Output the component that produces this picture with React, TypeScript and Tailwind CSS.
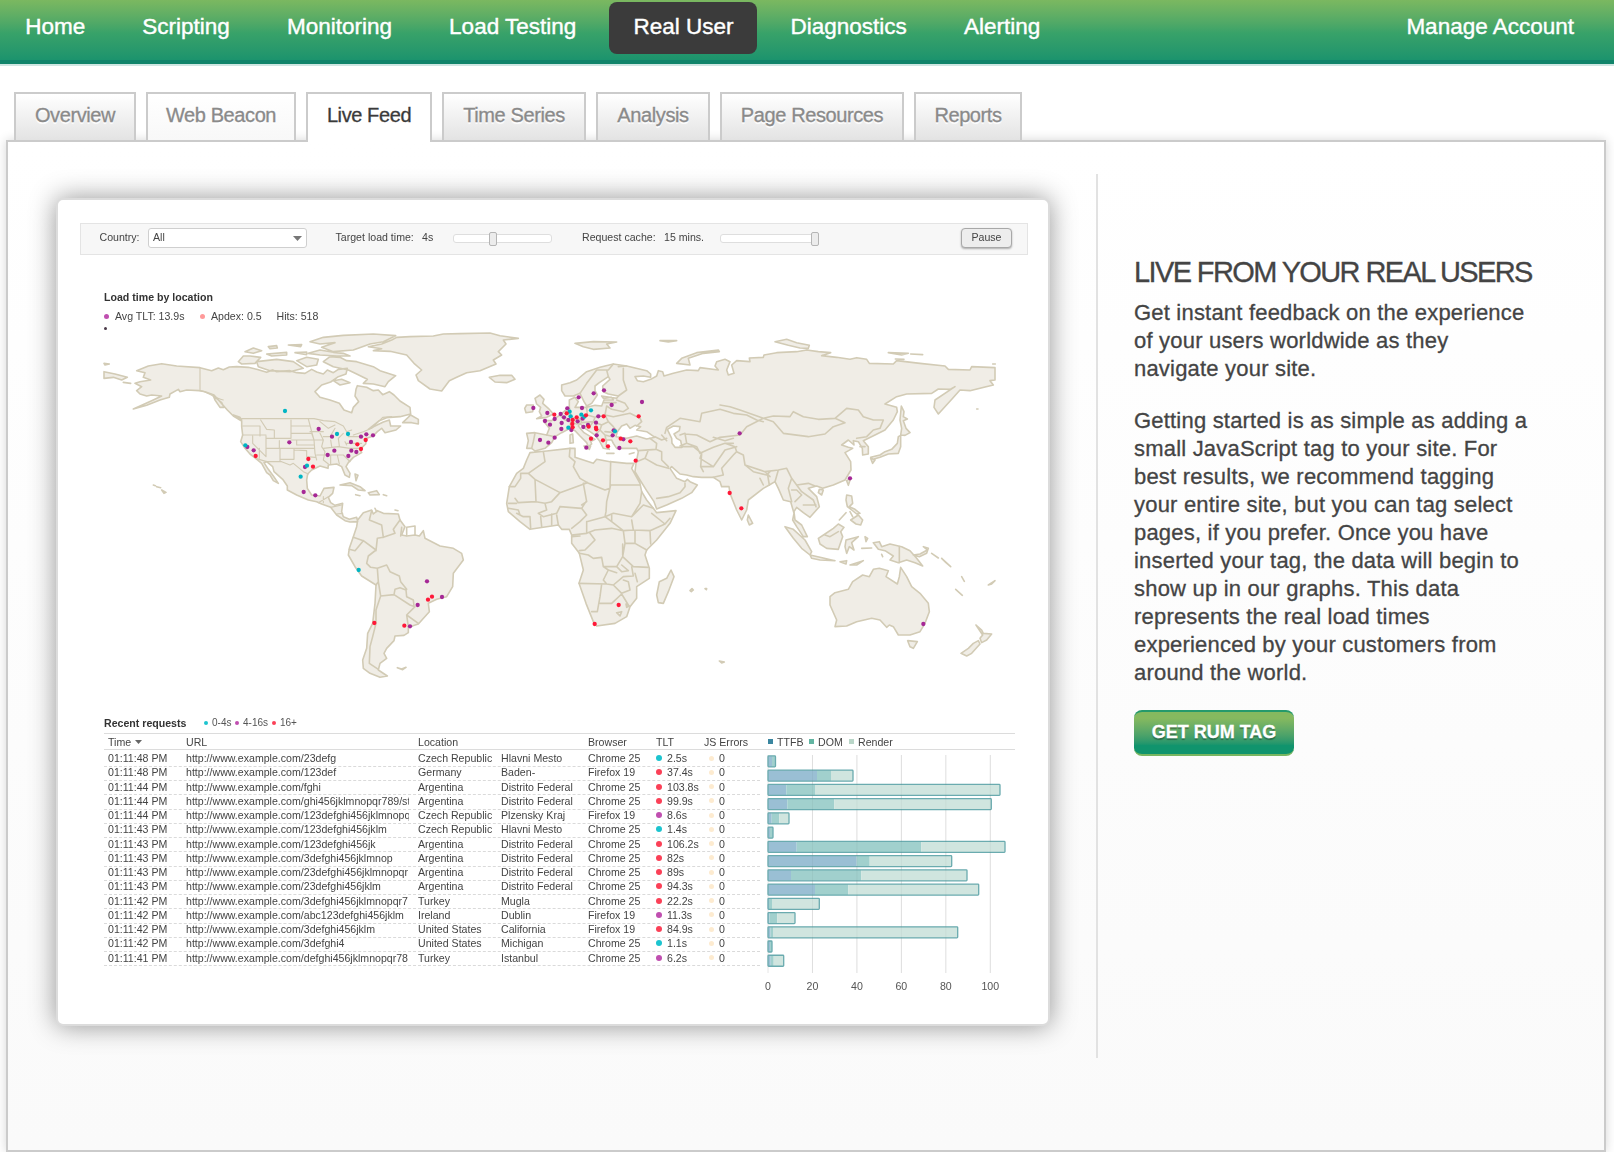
import React from "react";

const NAV = ["Home", "Scripting", "Monitoring", "Load Testing", "Real User", "Diagnostics", "Alerting"];

const TABS = [
  { label: "Overview", width: "w-[122px]", look: "bg-linear-to-b from-white to-[#e3e3e3] text-[#8a8a8a]" },
  { label: "Web Beacon", width: "w-[150px]", look: "bg-linear-to-b from-white to-[#f8f8f8] text-[#8a8a8a]" },
  { label: "Live Feed", width: "w-[126px]", look: "bg-white text-[#3a3a3a]" },
  { label: "Time Series", width: "w-[144px]", look: "bg-linear-to-b from-white to-[#e3e3e3] text-[#8a8a8a]" },
  { label: "Analysis", width: "w-[114px]", look: "bg-linear-to-b from-white to-[#e3e3e3] text-[#8a8a8a]" },
  { label: "Page Resources", width: "w-[184px]", look: "bg-linear-to-b from-white to-[#e3e3e3] text-[#8a8a8a]" },
  { label: "Reports", width: "w-[108px]", look: "bg-linear-to-b from-white to-[#e3e3e3] text-[#8a8a8a]" },
];

type Row = [string, string, string, string, string, string, string];
const ROWS: Row[] = [
  ["01:11:48 PM", "23defg", "Czech Republic", "Hlavni Mesto", "Chrome 25", "2.5s", "t"],
  ["01:11:48 PM", "123def", "Germany", "Baden-", "Firefox 19", "37.4s", "r"],
  ["01:11:44 PM", "fghi", "Argentina", "Distrito Federal", "Chrome 25", "103.8s", "r"],
  ["01:11:44 PM", "ghi456jklmnopqr789/st", "Argentina", "Distrito Federal", "Chrome 25", "99.9s", "r"],
  ["01:11:44 PM", "123defghi456jklmnopq", "Czech Republic", "Plzensky Kraj", "Firefox 19", "8.6s", "p"],
  ["01:11:43 PM", "123defghi456jklm", "Czech Republic", "Hlavni Mesto", "Chrome 25", "1.4s", "t"],
  ["01:11:43 PM", "123defghi456jk", "Argentina", "Distrito Federal", "Chrome 25", "106.2s", "r"],
  ["01:11:43 PM", "3defghi456jklmnop", "Argentina", "Distrito Federal", "Chrome 25", "82s", "r"],
  ["01:11:43 PM", "23defghi456jklmnopqr", "Argentina", "Distrito Federal", "Chrome 25", "89s", "r"],
  ["01:11:43 PM", "23defghi456jklm", "Argentina", "Distrito Federal", "Chrome 25", "94.3s", "r"],
  ["01:11:42 PM", "3defghi456jklmnopqr7", "Turkey", "Mugla", "Chrome 25", "22.2s", "r"],
  ["01:11:42 PM", "abc123defghi456jklm", "Ireland", "Dublin", "Firefox 19", "11.3s", "p"],
  ["01:11:42 PM", "3defghi456jklm", "United States", "California", "Firefox 19", "84.9s", "r"],
  ["01:11:42 PM", "3defghi4", "United States", "Michigan", "Chrome 25", "1.1s", "t"],
  ["01:11:41 PM", "defghi456jklmnopqr78", "Turkey", "Istanbul", "Chrome 25", "6.2s", "p"],
];

const DOT_BG: Record<string, string> = { t: "bg-[#1cc4cf]", r: "bg-[#fb4057]", p: "bg-[#c04fb0]" };

// Bar segment ends in px from the axis: first byte, DOM, render.
const BARS: [number, number, number][] = [
  [4, 7, 7.5], [49, 63, 85], [18.3, 47, 232], [19.3, 66.3, 223.3], [3.7, 11.3, 21],
  [2, 5, 5], [28.7, 153.3, 237], [88.7, 101.7, 183.7], [23, 93.3, 199], [47, 80.3, 210.7],
  [1, 4, 51.3], [1.5, 9.3, 27], [2.5, 5, 189.7], [2, 4, 4], [2.7, 5.7, 15.7],
];

// Map geometry. The Americas use their own origin; the Old World group is shifted right by 1170.
const AMERICAS =
  "M140,152 175,138 215,131 260,138 330,143 365,152 385,144 400,149 418,141 440,140 475,142 500,148 530,157 548,150 560,155 600,152 620,158 645,160 665,148 680,156 700,162 712,150 730,158 745,148 772,145 768,162 745,170 722,186 695,195 675,215 690,232 720,240 748,250 762,270 785,278 790,262 806,245 795,228 798,208 802,197 830,202 850,212 865,210 878,224 898,215 912,225 930,243 960,262 962,282 930,290 890,293 868,302 835,328 855,318 880,306 898,300 902,318 932,318 918,330 885,338 875,325 862,335 850,348 830,355 827,372 810,388 815,398 790,412 775,428 768,440 780,460 778,472 765,465 755,440 740,432 715,435 714,445 690,438 665,450 653,462 650,480 652,505 665,525 690,528 702,505 732,502 728,520 715,532 722,548 735,556 758,550 755,575 760,590 778,598 800,592 803,605 780,606 765,602 740,585 722,562 695,552 680,545 655,540 620,525 592,510 592,498 578,478 552,455 548,440 530,425 522,428 535,448 550,468 565,490 550,482 540,465 530,458 515,430 497,415 480,402 465,385 452,365 458,345 455,320 455,303 430,288 412,270 390,245 372,225 345,215 328,212 290,210 270,215 265,208 240,222 238,232 210,240 170,256 130,267 150,258 185,242 215,228 185,225 170,228 150,222 140,212 155,200 135,190 150,185 182,180 160,172 165,158Z " +
  "M820,578 845,570 850,582 862,572 880,580 925,582 930,600 945,620 935,645 950,648 975,645 988,648 1000,632 1005,655 1050,678 1090,685 1115,700 1120,720 1090,760 1088,800 1070,830 1040,838 1015,850 1018,875 985,912 955,922 955,938 942,946 915,948 912,962 890,985 882,1000 890,1015 870,1030 865,1050 892,1068 870,1072 840,1060 820,1045 818,1020 830,985 833,940 848,910 855,850 858,795 815,768 795,740 775,705 778,685 790,650 800,620 803,600Z " +
  "M835,80 875,72 905,60 920,52 960,50 1030,48 1060,42 1110,41 1200,39 1230,47 1285,55 1240,60 1248,72 1225,95 1235,105 1210,120 1218,132 1170,152 1130,158 1100,172 1078,182 1055,213 1020,207 985,182 978,165 995,150 972,130 950,105 900,94 850,92 875,86Z " +
  "M660,65 700,52 760,46 850,42 917,47 880,65 840,72 790,90 730,95 695,82 735,68 690,72Z " +
  "M700,125 720,110 750,112 770,122 800,125 850,140 870,152 917,167 895,185 885,200 850,192 820,190 832,178 800,162 775,150 730,140Z " +
  "M500,125 560,118 610,125 640,145 600,155 540,152 505,140Z M445,125 460,108 480,108 512,112 495,130 455,132Z M465,95 490,84 515,92 490,100Z M535,80 560,77 562,84 540,86Z M595,75 635,74 632,80Z M530,102 590,97 590,105 545,108Z M615,98 650,96 650,104Z M620,122 650,112 685,118 680,135 650,140Z M655,100 690,90 730,97 760,100 780,108 740,108 690,105Z M730,182 755,178 780,188 750,195Z " +
  "M938,308 962,285 985,298 985,312 965,308Z M42,155 75,162 112,172 95,180 70,172 42,175Z M42,130 58,132 45,135Z M100,187 122,190Z M430,285 450,292 455,300Z M370,228 395,248 402,262 390,262 375,240Z " +
  "M750,495 780,488 810,500 825,512 805,510 785,497Z M835,518 860,512 868,524 840,525Z M797,524 810,527Z M880,524 890,527Z M795,462 804,466 798,482Z M200,500 212,503Z M190,495 196,497Z M215,510 228,517 222,520Z M922,1043 935,1047 948,1042 938,1049Z M855,565 860,575Z M915,570 924,572Z";

const AMERICAS_LINES =
  "M330,143V212 M330,212C350,212 370,235 400,240 M455,296H672 M672,296 700,302 735,305 760,318 M760,318 770,335 785,330 M790,345 820,335 845,325 860,310 878,292 905,290 M458,318H510V348 M458,345H528 M512,300 530,328 553,330 M488,348V370L528,410 528,348 M553,330V355H603V300 M553,355H528 M603,318H660 M603,340H665L672,360H603 M528,385H672 M570,387V425 M568,362V385 M620,360V375H672 M612,387V418H572 M612,390 650,392 650,410 675,412 M655,297 665,335 672,360 675,400 680,420 M530,425H575L600,435 610,430 640,455 655,462 M497,415 530,425 M690,340 700,360 695,380 705,395 700,420 715,432 M660,335 700,335 M672,360H700 M680,405H760 M700,385 745,380 780,385 815,385 M722,360 725,380 M745,355 748,378 M722,405V432 M742,405 748,432 M760,405 780,425 M765,365 770,375 M770,370H815 M775,350 820,350 M690,305 715,325 735,315 M700,350 720,350 735,325 M745,355 760,340 M685,548 715,530 M700,530V548 M722,562 755,555 M740,582 758,580 M508,415V385";

const SA_LINES =
  "M845,572 838,600 875,615 880,652 M930,600 910,628 915,640 880,652 862,655 858,692 M790,652 820,662 858,690 M778,688 795,692 820,662 M858,690 835,708 830,730 842,742 862,745 890,735 900,755 928,768 932,785 950,808 M862,745 865,785 858,795 M865,785 872,828 912,824 915,808 930,803 948,810 950,830 970,840 972,858 M912,824 960,855 975,860 950,885 985,910 M950,885 955,920 M872,828 858,870 858,910 848,950 840,980 838,1030 865,1048 M935,622 932,648 M950,622 975,618 975,645 M950,622V646";

const OLD_WORLD =
  "M140,340 165,338 200,345 208,325 190,302 215,302 240,285 255,272 268,262 268,240 285,232 295,245 285,262 320,262 345,256 365,258 372,240 400,240 395,232 370,235 365,228 410,235 415,228 385,222 370,215 368,198 390,178 385,170 358,188 345,198 345,212 352,225 335,250 320,258 312,245 300,220 280,228 255,228 245,212 245,195 270,188 290,180 320,155 360,142 400,132 440,138 500,152 512,162 512,172 490,168 465,170 472,182 490,185 512,178 530,168 535,152 548,155 552,168 580,160 620,150 655,152 660,143 715,150 705,138 710,125 735,118 750,125 740,150 745,165 762,160 755,135 770,122 810,125 808,114 850,112 852,105 890,98 950,95 980,90 1015,95 1052,98 1025,107 1070,112 1110,118 1130,113 1160,118 1168,130 1240,132 1250,122 1320,130 1395,138 1405,148 1470,150 1475,140 1545,143 1545,180 1530,182 1540,195 1500,205 1470,212 1440,210 1418,235 1375,282 1362,262 1365,240 1425,200 1410,208 1375,207 1355,220 1280,222 1250,230 1215,252 1250,262 1252,275 1240,300 1215,330 1185,345 1150,362 1165,380 1165,402 1148,405 1147,385 1135,365 1120,362 1122,375 1105,360 1085,375 1105,382 1118,385 1095,398 1112,425 1113,450 1095,480 1060,495 1028,505 1010,498 985,505 1010,530 1018,560 990,592 970,578 950,562 942,575 945,600 965,615 982,650 970,650 950,620 938,600 942,580 932,545 910,540 895,505 885,485 868,495 850,505 805,540 800,570 785,600 770,570 750,520 747,500 725,500 720,485 700,472 665,472 640,470 620,465 600,462 575,440 570,445 590,475 615,485 622,478 630,485 652,495 635,518 605,535 560,555 530,567 522,545 500,512 480,480 465,455 468,430 475,395 470,385 440,385 410,385 400,370 395,360 380,360 378,375 388,388 370,385 358,362 345,345 330,335 310,322 300,310 295,318 312,338 345,358 338,362 330,358 335,372 325,380 320,368 300,348 285,332 270,325 245,338 225,350 215,368 195,385 165,393 155,385 140,385 145,362Z " +
  "M150,398 200,393 270,385 285,385 285,412 340,430 350,418 390,425 440,430 462,430 455,445 480,490 485,515 500,540 520,565 530,578 588,572 570,610 530,660 500,690 495,705 508,745 508,775 470,800 470,835 450,860 440,890 405,910 350,918 340,905 318,850 297,790 310,750 298,700 275,670 275,645 268,628 245,628 235,615 190,622 150,628 120,605 85,575 80,550 88,500 110,460 130,445 140,420Z " +
  "M28,172 60,166 95,166 105,178 80,188 45,186Z M165,235 180,225 192,238 188,250 205,265 220,282 200,292 170,296 185,288 178,275 182,262 170,252Z M140,255 160,255 158,275 138,278 134,265Z M285,70 340,65 410,66 380,72 390,84 340,88 310,80Z M540,62 590,62 565,66Z M590,130 605,115 650,98 715,90 718,95 670,100 625,115 630,135Z M573,750 582,770 565,815 550,850 535,848 530,825 538,785 560,775Z M630,812 636,806 640,810 634,815Z M675,806 680,806 679,809Z M718,1023 733,1026 725,1029Z M270,345 278,342 280,368 270,370Z M380,400 402,400Z M448,402 462,398Z M805,585 818,610 808,615 802,600Z M312,378 332,378 328,388Z " +
  "M885,65 920,58 950,68 988,76 985,85 960,84 925,76Z M1225,98 1285,100 1265,105Z M1292,102 1328,104Z M1246,117 1272,118Z M1264,258 1272,275 1270,290 1282,297 1270,302 1278,325 1290,338 1275,346 1262,345 1265,325 1260,300Z M1262,346 1262,380 1255,400 1225,402 1200,412 1180,418 1172,412 1200,405 1215,395 1235,388 1252,370 1255,350Z M1172,415 1185,420 1178,430Z M1100,482 1112,475 1105,496Z M1018,508 1030,510 1025,525 1015,518Z " +
  "M1100,525 1115,528 1118,550 1108,560 1125,568 1140,580 1130,582 1115,570 1102,560 1098,540Z M1112,600 1135,585 1148,600 1142,615 1128,612Z M1078,600 1098,578Z M1110,575 1118,590Z " +
  "M915,620 940,628 975,660 995,695 990,705 965,685 940,655Z M990,705 1020,712 1065,722 1020,720 995,715Z M1080,725 1100,722 1098,732Z M1110,735 1150,722 1130,735Z M1015,655 1035,642 1060,625 1075,612 1092,622 1082,635 1088,650 1075,688 1040,685 1020,672Z M1098,660 1135,650 1115,668 1122,690 1108,680 1100,700 1095,680Z M1155,650 1163,655 1158,665Z M1145,685 1175,684Z M1180,668 1198,665 1205,680 1230,672 1265,680 1290,692 1310,715 1328,738 1305,728 1280,720 1255,728 1230,720 1240,708 1215,692 1195,688Z M1300,705 1320,702 1342,690 1330,680 1345,685 1340,700 1318,710Z M1355,700 1375,714Z M1385,715 1412,740 1398,728Z M1445,770 1453,784Z M1427,808 1447,826Z M1525,795 1545,782 1535,792Z M1205,703 1208,710Z " +
  "M1050,830 1065,818 1105,808 1118,785 1148,765 1168,770 1180,748 1198,745 1225,752 1218,770 1252,792 1258,770 1262,742 1280,770 1295,800 1320,820 1345,850 1348,875 1335,910 1320,935 1290,945 1255,945 1240,920 1228,915 1220,922 1200,900 1175,895 1130,905 1100,918 1065,920 1070,900 1050,855Z M1283,962 1312,965 1300,985 1290,980Z M1488,915 1505,930 1510,940 1535,942 1520,960 1505,968 1500,955 1508,945Z M1495,962 1500,972 1475,1000 1460,1008 1443,1000 1465,985 1480,970Z M1538,132 1546,132Z M1490,267 1494,267Z";

const OLD_LINES =
  "M165,340 160,365 155,385 M200,345 225,350 M240,285 255,300 272,305 270,325 M255,272 270,290 M268,262 272,285 285,300 300,295 M285,300 272,305 290,312 300,310 M320,262 322,285 345,292 375,285 380,258 M300,295 322,285 M300,295 305,308 340,305 345,292 M340,305 330,318 310,320 M340,305 365,315 385,305 375,285 M385,305 400,320 412,335 M365,315 360,330 375,345 395,350 M345,345 360,330 M375,345 378,360 M375,335 405,338 M380,258 395,268 430,275 445,265 435,250 410,240 M372,248H408 M415,228 440,210 430,180 430,145 M440,138 415,140 M400,132 385,150 350,150 320,190 300,220 M385,170 380,150 M375,285 400,290 450,280 480,295 485,305 470,318 M525,350 545,360 560,355 M510,355 530,370 528,388 475,392 M528,388 545,395 545,420 565,440 M528,388 505,390 495,415 470,425 M495,415 530,435 565,445 M545,345 560,362 M555,340 560,322 600,295 660,305 665,280 720,268 760,280 800,285 830,300 850,305 M600,345 615,340 620,370 600,378 M620,370 650,380 660,400 700,382 735,370 760,370 M605,380 640,380 665,400 662,440 670,455 M615,342 650,345 690,365 720,352 780,345 800,320 850,295 880,305 910,340 985,350 1035,342 1060,320 1095,308 1065,295 1015,298 970,290 940,275 930,290 880,288 850,295 M665,400 660,415 700,440 735,390 770,380 M700,440 665,440 M700,472 730,465 725,445 760,405 770,395 790,405 795,435 855,455 895,450 920,445 935,475 950,495 985,490 1005,498 M735,370 765,380 770,395 M700,352 735,362 760,355 M795,435 820,455 860,465 870,455 M863,465 868,495 M895,450 885,485 M855,455 870,470 M935,510 950,510 965,525 945,545 M950,495 965,515 1000,540 1008,560 M970,555 1008,555 M935,475 925,505 935,545 M1065,295 1100,265 1135,270 1150,290 1180,300 1210,300 1200,325 1180,330 1160,350 1130,355 M840,475 850,495 M720,255 750,260 780,270 850,295 M1258,680V728 M1035,645 1050,650 1075,635 M530,535 565,530 600,518 615,500 615,490 M1140,380H1155";

const AFRICA_LINES =
  "M270,385 268,410 285,425 280,440 300,475 322,488 375,510 390,505 392,425 M392,495H480 M392,495 380,545 378,575 375,590 M322,488 310,490 320,545 305,555 M322,488 240,518 165,478 145,460 195,425 190,395 M165,478 168,545 115,548 105,535 M145,460 122,460 122,475 105,500 88,500 M168,545 195,550 215,545 240,518 M195,550 200,570 175,580 190,590 230,580 240,560 M240,560 305,565 M230,585 235,615 M182,590 185,620 M215,582 215,615 M150,590 152,625 M110,580 130,590 150,590 M85,550 110,550 M85,565 115,570 120,585 M305,565 320,585 300,605 275,625 M305,565 318,545 M320,605 375,590 400,580 455,590 480,550 485,515 M320,605 320,640 275,645 M320,640 345,630 395,625 430,632 460,630 455,600 M395,585 395,605 430,632 M375,590 395,605 M460,630 510,632 555,612 570,595 M510,632 512,672 M515,580 540,600 555,612 M455,590 490,555 520,565 M430,632 435,670 428,710 410,740 370,740 365,712 340,715 325,705 298,700 M330,640 345,660 315,690 298,692 M275,650 300,648 M435,670 465,670 500,690 M465,632 465,668 M428,672V705 M428,710 460,740 505,742 M410,740 425,755 445,752 425,735 M370,740 385,750 370,780 380,792 297,790 M385,750 410,758 M380,792 400,795 430,770 460,768 455,740 M400,795 425,820 450,810 445,785 430,780 M365,792 360,830 352,875 335,875 M360,850 395,850 425,822 445,855 M465,760 472,785 M410,878 425,875 420,888Z M438,852 448,858 440,862Z";

const dots = (list: string) => list.split(" ").map((s) => s.split(",").map(Number));
const POINTS: [string, number[][]][] = [
  ["#a62896", dots("686,327 726,350 598,367 472,381 491,391 645,441 641,516 676,526 713,405 733,392 775,408 784,392 799,396 783,366 813,350 829,343 849,346 1011,784 1056,831 983,855 960,919")],
  ["#a62896", dots("1330,264 1511,220 1542,211 1466,232 1476,264 1565,255 1656,246 1372,279 1432,265 1412,282 1422,292 1394,297 1365,303 1380,314 1415,309 1414,327 1435,300 1350,360 1375,368 1394,353 1444,330 1463,304 1478,296 1525,289 1518,308 1480,321 1494,315 1520,346 1489,383 1571,331 1568,346 1600,358 1588,384 1949,340 2280,475 2500,912")],
  ["#00b5c4", dots("585,273 741,342 774,342 466,376 651,437 632,470 806,750 1439,275 1442,289 1503,271 1474,284 1483,290 1435,323 1575,334")],
  ["#ff1838", dots("497,408 655,417 669,440 802,373 827,360 813,387 1026,830 1014,839 853,909 943,917 1393,284 1430,280 1460,292 1488,286 1541,289 1646,289 1448,300 1448,322 1447,312 1496,320 1518,323 1519,328 1503,356 1539,361 1554,379 1592,356 1621,364 1637,422 1586,855 1514,912 1919,519 1954,565")],
];

function WorldMap() {
  return (
    <svg viewBox="0 0 2850 1110" className="block h-[370px] w-[950px]" aria-label="World map">
      <g fill="#f0ede6" stroke="#d2cbb5" strokeWidth="4.8" strokeLinejoin="round" strokeLinecap="round">
        <path d={AMERICAS} />
        <path d={AMERICAS_LINES} fill="none" strokeWidth="3.4" />
        <path d={SA_LINES} fill="none" />
        <g transform="translate(1170 0)">
          <path d={OLD_WORLD} />
          <g fill="#fff">
            <path d="M408,350 412,335 425,318 440,312 450,325 465,316 482,320 470,330 500,335 525,352 500,357 470,348 440,355Z" />
            <path d="M562,328 580,318 600,320 598,332 582,342 590,355 602,362 606,382 585,382 576,370 575,355Z" />
          </g>
          <path d={OLD_LINES} fill="none" />
          <path d={AFRICA_LINES} fill="none" />
        </g>
      </g>
      {POINTS.map(([color, pts], i) => (
        <g key={i} fill={color}>
          {pts.map(([x, y], j) => (
            <circle key={j} cx={x} cy={y} r="6.4" />
          ))}
        </g>
      ))}
    </svg>
  );
}

function RequestChart() {
  return (
    <svg viewBox="0 0 260 250" className="block h-[250px] w-[260px] shrink-0">
      {[0, 20, 40, 60, 80, 100].map((v) => (
        <g key={v}>
          <line x1={8 + v * 2.223} x2={8 + v * 2.223} y1="5" y2="223" stroke="#e6e6e6" />
          <text x={8 + v * 2.223} y="240" textAnchor="middle" fontSize="10.6" fill="#555">
            {v}
          </text>
        </g>
      ))}
      {BARS.map(([a, b, c], i) => {
        const y = 5.9 + i * 14.24;
        return (
          <g key={i}>
            <rect x="8" y={y} width={a} height="11" fill="#9abfd4" />
            <rect x={8 + a} y={y} width={b - a} height="11" fill="#a1d0cd" />
            <rect x={8 + b} y={y} width={c - b} height="11" fill="#d0e5df" />
            <rect x="8" y={y} width={c} height="11" rx="0.8" fill="none" stroke="#6aabaf" strokeWidth="1.3" />
          </g>
        );
      })}
      {[20, 40, 60, 80, 100].map((v) => (
        <line key={v} x1={8 + v * 2.223} x2={8 + v * 2.223} y1="5" y2="223" stroke="#000" strokeOpacity="0.04" />
      ))}
    </svg>
  );
}

function Slider({ width, thumb }: { width: string; thumb: string }) {
  return (
    <div className={"relative h-[9px] rounded-[3px] border border-[#dedede] bg-white " + width}>
      <div className={"absolute -top-[3px] h-[14px] w-2 rounded-[2px] border border-[#b5b5b5] bg-[#ececec] " + thumb} />
    </div>
  );
}

function Toolbar() {
  return (
    <div className="ml-[22px] flex h-8 w-[948px] items-center border border-[#e4e4e4] bg-[#f7f7f7] pb-px">
      <span className="ml-[18.5px] w-[48.5px] -mt-0.5">Country:</span>
      <div className="flex h-5 w-[159px] items-center justify-between rounded-[3px] border border-[#cfcfcf] bg-white pr-1 pl-1">
        <span className="-mt-0.5">All</span>
        <svg width="9" height="5" viewBox="0 0 9 5" fill="#777"><path d="M0 0h9L4.500 5z" /></svg>
      </div>
      <span className="ml-[28.5px] w-[86.5px] -mt-0.5">Target load time:</span>
      <span className="w-[31px] -mt-0.5">4s</span>
      <Slider width="w-[99px]" thumb="left-[35px]" />
      <span className="ml-[30px] w-[82px] -mt-0.5">Request cache:</span>
      <span className="w-[56px] -mt-0.5">15 mins.</span>
      <Slider width="w-[98px]" thumb="left-[90px]" />
      <button className="ml-[143px] h-5 w-[51px] rounded-[4px] border border-[#a8a8a8] bg-[#ededed] pb-0.5 leading-none shadow-[0_1px_2px_rgba(0,0,0,0.3)]">
        Pause
      </button>
    </div>
  );
}

function RequestTable() {
  return (
    <div className="ml-[46px] w-[911px]">
      <div className="flex h-[18px] items-center pb-[3px] text-[#555]">
        <span className="w-[100px] font-bold text-[#333]">Recent requests</span>
        <i className="mr-1 size-1 rounded-full bg-[#1cc4cf]" />
        <span className="w-[23px] text-[10px]">0-4s</span>
        <i className="mr-1 size-1 rounded-full bg-[#c04fb0]" />
        <span className="w-[29px] text-[10px]">4-16s</span>
        <i className="mr-1 size-1 rounded-full bg-[#fb4057]" />
        <span className="text-[10px]">16+</span>
      </div>
      <div className="flex h-[17px] items-center border-y border-[#dcdcdc] pl-1">
        <div className="flex w-[78px] items-center gap-1">
          Time
          <svg width="7" height="4" viewBox="0 0 7 4" fill="#666"><path d="M0 0h7L3.500 4z" /></svg>
        </div>
        <span className="w-[232px]">URL</span>
        <span className="w-[170px]">Location</span>
        <span className="w-[68px]">Browser</span>
        <span className="w-[48px]">TLT</span>
        <span className="w-[64px]">JS Errors</span>
        <i className="mr-1 size-[5px] bg-[#3a86a0]" />
        <span className="w-8">TTFB</span>
        <i className="mr-1 size-[5px] bg-[#62b5a2]" />
        <span className="w-[31px]">DOM</span>
        <i className="mr-1 size-[5px] bg-[#b9d6c8]" />
        <span>Render</span>
      </div>
      <div className="flex">
        <div className="w-[656px] shrink-0 pt-[2.5px]">
          {ROWS.map(([time, path, country, region, browser, tlt, tone], i) => (
            <div key={i} className="flex h-[14.25px] items-center border-b border-dashed border-[#dadada] pb-[2px] pl-1 whitespace-nowrap">
              <span className="w-[78px]">{time}</span>
              <span className="w-[223px] overflow-hidden">http://www.example.com/{path}</span>
              <span className="ml-[9px] w-[83px]">{country}</span>
              <span className="w-[87px]">{region}</span>
              <span className="w-[68px]">{browser}</span>
              <i className={"mr-[5px] size-[6px] rounded-full " + DOT_BG[tone]} />
              <span className="w-[42px]">{tlt}</span>
              <i className="mr-[5px] size-[5px] rounded-full bg-[#fdebd0]" />
              <span>0</span>
            </div>
          ))}
        </div>
        <RequestChart />
      </div>
    </div>
  );
}

function FeedCard() {
  return (
    <div className="mt-[56px] ml-12 h-[828px] w-[994px] shrink-0 rounded-[7px] border-2 border-[#dcdcdc] bg-white text-[10.6px] leading-[14px] text-[#444] shadow-[0_0_27px_rgba(0,0,0,0.42)]">
      <div className="pt-[22.5px] blur-[0.3px]">
        <Toolbar />
        <div className="ml-[46px] pt-[35px] font-bold text-[#333]">Load time by location</div>
        <div className="mt-[5.5px] ml-[46px] flex items-center">
          <i className="mr-[6px] size-[5px] rounded-full bg-[#c04fb0]" />
          <span className="w-[85px]">Avg TLT: 13.9s</span>
          <i className="mr-[6px] size-[5px] rounded-full bg-[#ff9a9a]" />
          <span className="w-[65.5px]">Apdex: 0.5</span>
          <span>Hits: 518</span>
        </div>
        <div className="mt-[4px] ml-[46px] size-[3px] rounded-full bg-[#4a3a48]" />
        <div className="-mt-[10px] ml-8">
          <WorldMap />
        </div>
        <div className="mt-[25px]">
          <RequestTable />
        </div>
      </div>
    </div>
  );
}

export default function App() {
  return (
    <div className="flex h-[1152px] w-[1614px] flex-col overflow-hidden bg-white font-['Liberation_Sans',sans-serif]">
      <header className="flex h-[66px] shrink-0 items-start border-b-2 border-[#cfe6e2] bg-linear-to-b from-[#7bb860] via-[#38a269] via-50% to-[#12906e] bg-origin-border shadow-[inset_0_-4px_0_#11846a]">
        <nav className="flex flex-1 gap-[9.1px] pt-0.5 pl-[1.2px] text-[22.5px] text-white [-webkit-text-stroke:0.4px_#fff]">
          {NAV.map((item) => (
            <a
              key={item}
              className={
                "h-[52px] rounded-lg px-[24px] leading-[50px] " + (item === "Real User" ? "bg-[#3b3b3b]" : "")
              }
            >
              {item}
            </a>
          ))}
        </nav>
        <a className="pt-0.5 pr-[40px] text-[22.5px] leading-[50px] text-white [-webkit-text-stroke:0.4px_#fff]">Manage Account</a>
      </header>

      <div className="relative z-10 mt-[26px] -mb-0.5 ml-[14px] flex h-[50px] shrink-0 gap-[10px]">
        {TABS.map((t) => (
          <a
            key={t.label}
            className={
              "h-[50px] border-2 border-[#cbcbcb] text-center text-[20px] leading-[42px] tracking-[-0.4px] [text-shadow:0_2px_1px_#fff] [-webkit-text-stroke:0.3px] " +
              (t.label === "Live Feed" ? "border-b-0 " : "") +
              t.width +
              " " +
              t.look
            }
          >
            {t.label}
          </a>
        ))}
      </div>

      <main className="mx-1.5 mr-2 flex h-[1012px] shrink-0 border-2 border-[#cbcbcb] bg-linear-to-b from-white to-[#fafafa] shadow-[0_0_10px_rgba(0,0,0,0.16)]">
        <FeedCard />
        <div className="mt-8 ml-[46px] h-[884px] w-0.5 shrink-0 bg-[#e2e2e2]" />
        <section className="ml-9 w-[410px] pt-[110px] text-[22px] leading-7 tracking-[0.2px] text-[#444] [-webkit-text-stroke:0.3px]">
          <h1 className="text-[29px] leading-[40px] tracking-[-1.62px] whitespace-nowrap">LIVE FROM YOUR REAL USERS</h1>
          <p className="mt-[7px]">
            Get instant feedback on the experience
            <br />
            of your users worldwide as they
            <br />
            navigate your site.
          </p>
          <p className="mt-6">
            Getting started is as simple as adding a
            <br />
            small JavaScript tag to your site. For
            <br />
            best results, we recommend tagging
            <br />
            your entire site, but you can tag select
            <br />
            pages, if you prefer. Once you have
            <br />
            inserted your tag, the data will begin to
            <br />
            show up in our graphs. This data
            <br />
            represents the real load times
            <br />
            experienced by your customers from
            <br />
            around the world.
          </p>
          <button className="mt-[23px] block h-[46px] w-40 rounded-lg border-t-2 border-b-2 border-t-[#259a6b] border-b-[#78b661] bg-linear-to-b from-[#85b95f] from-15% to-[#10946d] to-80% pb-0.5 text-[18px] leading-none font-bold tracking-normal text-white [text-shadow:0_2px_1px_rgba(0,0,0,0.3)]">
            GET RUM TAG
          </button>
        </section>
      </main>
    </div>
  );
}
